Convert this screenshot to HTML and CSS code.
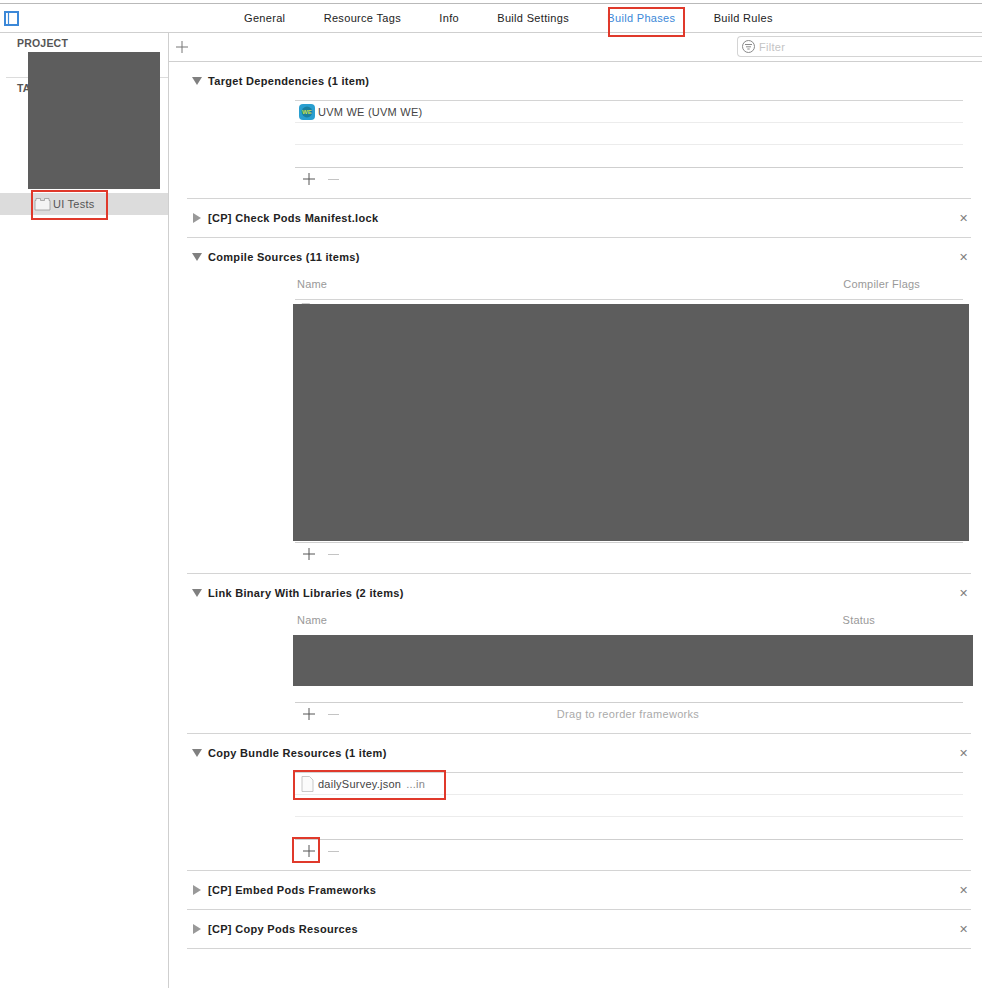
FILE: index.html
```html
<!DOCTYPE html>
<html lang="en">
<head>
  <meta charset="UTF-8">
  <title>Build Phases</title>
  <link rel="stylesheet" href="styles.css">
</head>
<body>
  <header class="tabbar">
    <svg class="panel-toggle" width="16" height="16" viewBox="0 0 16 16">
      <rect x="1" y="1" width="13" height="13" fill="none" stroke="#3b88d8" stroke-width="2"/>
      <line x1="4.500" y1="2" x2="4.500" y2="13" stroke="#3b88d8" stroke-width="1.200"/>
    </svg>
    <nav class="tabs">
      <span class="tab">General</span>
      <span class="tab">Resource Tags</span>
      <span class="tab">Info</span>
      <span class="tab">Build Settings</span>
      <span class="tab active">Build Phases</span>
      <span class="tab">Build Rules</span>
    </nav>
  </header>

  <div class="shell">
    <aside class="sidebar">
      <div class="side-head">PROJECT</div>
      <div class="side-rule"></div>
      <div class="side-head targets">TARGETS</div>
      <div class="side-row">
        <svg width="17" height="14" viewBox="0 0 17 14">
          <path d="M1 13V3.500h1V1.500h4.500v2h4v-2H15v2h1V13z" fill="#f4f4f4" stroke="#9a9a9a" stroke-width="0.800"/>
        </svg>
        <span>UI Tests</span>
      </div>
    </aside>

    <main class="editor">
      <div class="subbar">
        <span class="add-big">
          <svg width="12" height="12" viewBox="0 0 12 12"><path d="M6 0v12M0 6h12" stroke="#777" stroke-width="1"/></svg>
        </span>
        <div class="filter">
          <svg width="15" height="15" viewBox="0 0 15 15">
            <circle cx="7.500" cy="7.500" r="6" fill="none" stroke="#8a8a8a" stroke-width="1"/>
            <path d="M4 5.500h7M5 7.800h5M6.300 10h2.400" stroke="#8a8a8a" stroke-width="1"/>
          </svg>
          <span>Filter</span>
        </div>
      </div>

      <div class="phases">
        <section class="phase">
          <div class="phase-head"><i class="tri down"></i><h2>Target Dependencies (1 item)</h2></div>
          <div class="table">
            <div class="row">
              <svg class="row-icon" width="16" height="16" viewBox="0 0 16 16">
                <rect width="16" height="16" rx="4" fill="#2a9fd0"/>
                <circle cx="8" cy="8" r="5.400" fill="#1b7f9f"/>
                <text x="8" y="10" text-anchor="middle" class="we">WE</text>
              </svg>
              <span>UVM WE (UVM WE)</span>
            </div>
            <div class="row"></div>
            <div class="row"></div>
          </div>
          <div class="table-foot">
            <svg class="plus" width="12" height="12" viewBox="0 0 12 12"><path d="M6 0v12M0 6h12" stroke="#555" stroke-width="1"/></svg>
            <span class="minus"></span>
          </div>
        </section>

        <section class="phase">
          <div class="phase-head"><i class="tri right"></i><h2>[CP] Check Pods Manifest.lock</h2><span class="close">&#10005;</span></div>
        </section>

        <section class="phase">
          <div class="phase-head"><i class="tri down"></i><h2>Compile Sources (11 items)</h2><span class="close">&#10005;</span></div>
          <div class="columns"><span>Name</span><span class="flags">Compiler Flags</span></div>
          <div class="table">
            <div class="row">
              <svg class="row-icon file" width="13" height="16" viewBox="0 0 13 16"><path d="M1 .5h7.500l3.500 3.500v11.500H1z" fill="#fbfbfb" stroke="#bbb" stroke-width="0.800"/></svg>
            </div>
            <div class="row"></div><div class="row"></div><div class="row"></div><div class="row"></div>
            <div class="row"></div><div class="row"></div><div class="row"></div><div class="row"></div>
            <div class="row"></div><div class="row"></div>
          </div>
          <div class="table-foot">
            <svg class="plus" width="12" height="12" viewBox="0 0 12 12"><path d="M6 0v12M0 6h12" stroke="#555" stroke-width="1"/></svg>
            <span class="minus"></span>
          </div>
        </section>

        <section class="phase">
          <div class="phase-head"><i class="tri down"></i><h2>Link Binary With Libraries (2 items)</h2><span class="close">&#10005;</span></div>
          <div class="columns"><span>Name</span><span class="status">Status</span></div>
          <div class="table">
            <div class="row"></div><div class="row"></div><div class="row"></div>
          </div>
          <div class="table-foot">
            <svg class="plus" width="12" height="12" viewBox="0 0 12 12"><path d="M6 0v12M0 6h12" stroke="#555" stroke-width="1"/></svg>
            <span class="minus"></span>
            <span class="hint">Drag to reorder frameworks</span>
          </div>
        </section>

        <section class="phase">
          <div class="phase-head"><i class="tri down"></i><h2>Copy Bundle Resources (1 item)</h2><span class="close">&#10005;</span></div>
          <div class="table">
            <div class="row">
              <svg class="row-icon file" width="13" height="16" viewBox="0 0 13 16"><path d="M1 .5h7.500l3.500 3.500v11.500H1z" fill="#fbfbfb" stroke="#bbb" stroke-width="0.800"/></svg>
              <span>dailySurvey.json</span>
              <span class="row-dim">...in</span>
            </div>
            <div class="row"></div>
            <div class="row"></div>
          </div>
          <div class="table-foot">
            <svg class="plus" width="12" height="12" viewBox="0 0 12 12"><path d="M6 0v12M0 6h12" stroke="#555" stroke-width="1"/></svg>
            <span class="minus"></span>
          </div>
        </section>

        <section class="phase">
          <div class="phase-head"><i class="tri right"></i><h2>[CP] Embed Pods Frameworks</h2><span class="close">&#10005;</span></div>
        </section>

        <section class="phase">
          <div class="phase-head"><i class="tri right"></i><h2>[CP] Copy Pods Resources</h2><span class="close">&#10005;</span></div>
        </section>
      </div>
    </main>
  </div>

  <!-- redacted areas -->
  <div class="redact r-side"></div>
  <div class="redact r-compile"></div>
  <div class="redact r-link"></div>

  <!-- red annotations -->
  <div class="mark m-tab"></div>
  <div class="mark m-target"></div>
  <div class="mark m-file"></div>
  <div class="mark m-plus"></div>
</body>
</html>
```

FILE: styles.css
```css
* {
  box-sizing: border-box;
}

body {
  margin: 0;
  height: 100vh;
  overflow: hidden;
  position: relative;
  background: #fff;
  color: #222;
  font-family: "Liberation Sans", Arial, sans-serif;
  font-size: 11px;
}

/* Barre du haut */
.tabbar {
  margin-top: 3px;
  height: 30px;
  border-top: 1px solid #b9b9b9;
  border-bottom: 1px solid #cfcfcf;
  position: relative;
  padding-left: 244px;
  display: flex;
  align-items: center;
}

.panel-toggle {
  position: absolute;
  left: 4px;
  top: 7px;
}

.tabs {
  display: flex;
  gap: 38.3px;
}

.tab {
  font-size: 11px;
  letter-spacing: 0.32px;
  color: #222;
  white-space: nowrap;
}

.tab.active {
  color: #3b88d8;
}

.shell {
  display: flex;
  height: calc(100vh - 33px);
}

/* Colonne de gauche */
.sidebar {
  width: 169px;
  flex: none;
  border-right: 1px solid #cfcfcf;
  padding-top: 4px;
}

.side-head {
  padding-left: 17px;
  height: 13px;
  line-height: 13px;
  font-weight: bold;
  font-size: 10.5px;
  letter-spacing: 0.2px;
  color: #555;
}

.side-rule {
  margin: 27px 0 0 6px;
  border-top: 1px solid #dcdcdc;
}

.targets {
  margin-top: 4px;
}

.side-row {
  margin-top: 98px;
  height: 22px;
  background: #dcdcdc;
  display: flex;
  align-items: center;
  gap: 2px;
  padding-left: 34px;
  color: #555;
  letter-spacing: 0.24px;
}

/* Zone principale */
.editor {
  flex: 1;
  min-width: 0;
}

.subbar {
  height: 29px;
  border-bottom: 1px solid #cfcfcf;
  display: flex;
  align-items: center;
  justify-content: space-between;
  padding-left: 7px;
}

.add-big {
  display: flex;
}

.filter {
  width: 245px;
  height: 21px;
  margin-top: -1px;
  border: 1px solid #d4d4d4;
  border-right: none;
  border-radius: 4px 0 0 4px;
  display: flex;
  align-items: center;
  gap: 3px;
  padding-left: 3px;
  color: #c4c4c4;
  letter-spacing: 0.3px;
}

.phases {
  margin: 0 11px 0 18px;
}

.phase {
  border-bottom: 1px solid #d4d4d4;
}

.phase-head {
  height: 38px;
  display: flex;
  align-items: center;
  padding: 0 3px 0 5px;
}

.phase-head h2 {
  margin: 0 0 0 6px;
  font-size: 11px;
  font-weight: bold;
  letter-spacing: 0.31px;
  color: #222;
  flex: 1;
}

.tri {
  width: 0;
  height: 0;
  flex: none;
}

.tri.down {
  border-left: 5px solid transparent;
  border-right: 5px solid transparent;
  border-top: 8px solid #808080;
}

.tri.right {
  margin-left: 1px;
  margin-right: 1px;
  border-top: 5px solid transparent;
  border-bottom: 5px solid transparent;
  border-left: 8px solid #999;
}

.close {
  font-size: 11px;
  color: #808080;
}

.columns {
  margin: 0 8px 0 110px;
  height: 23px;
  padding-bottom: 7px;
  display: flex;
  align-items: center;
  justify-content: space-between;
  color: #999;
  letter-spacing: 0.2px;
}

.flags {
  margin-right: 43px;
}

.status {
  margin-right: 88px;
}

.table {
  margin: 0 8px 0 108px;
  border-top: 1px solid #d4d4d4;
}

.row {
  height: 22px;
  border-bottom: 1px solid #ececec;
  display: flex;
  align-items: center;
  gap: 3px;
  padding-left: 4px;
  color: #444;
  letter-spacing: 0.24px;
}

.row:last-child {
  border-bottom-color: transparent;
}

.row-dim {
  color: #888;
  margin-left: 2px;
}

.row-icon {
  flex: none;
}

.row-icon.file {
  margin: 0 1px 0 2px;
}

.we {
  font-size: 6px;
  font-weight: bold;
  fill: #c9e04a;
}

.table-foot {
  margin: 0 8px 0 108px;
  height: 31px;
  border-top: 1px solid #cfcfcf;
  display: flex;
  align-items: flex-start;
  padding: 5px 0 0 8px;
  position: relative;
}

.minus {
  width: 11px;
  border-top: 1px solid #c4c4c4;
  margin: 6px 0 0 13px;
}

.hint {
  position: absolute;
  left: 0;
  right: 2px;
  top: 5px;
  text-align: center;
  color: #aaa;
  letter-spacing: 0.3px;
}

/* Zones masquees */
.redact {
  position: absolute;
  background: #5d5d5d;
}

.r-side {
  left: 28px;
  top: 52px;
  width: 132px;
  height: 137px;
}

.r-compile {
  left: 293px;
  top: 304px;
  width: 676px;
  height: 237px;
}

.r-link {
  left: 293px;
  top: 635px;
  width: 680px;
  height: 51px;
}

/* Cadres rouges */
.mark {
  position: absolute;
  border: 2px solid #e0392b;
}

.m-tab {
  left: 608px;
  top: 7px;
  width: 77px;
  height: 30px;
}

.m-target {
  left: 31px;
  top: 190px;
  width: 77px;
  height: 30px;
}

.m-file {
  left: 293px;
  top: 770px;
  width: 153px;
  height: 30px;
}

.m-plus {
  left: 292px;
  top: 837px;
  width: 28px;
  height: 26px;
}
```
